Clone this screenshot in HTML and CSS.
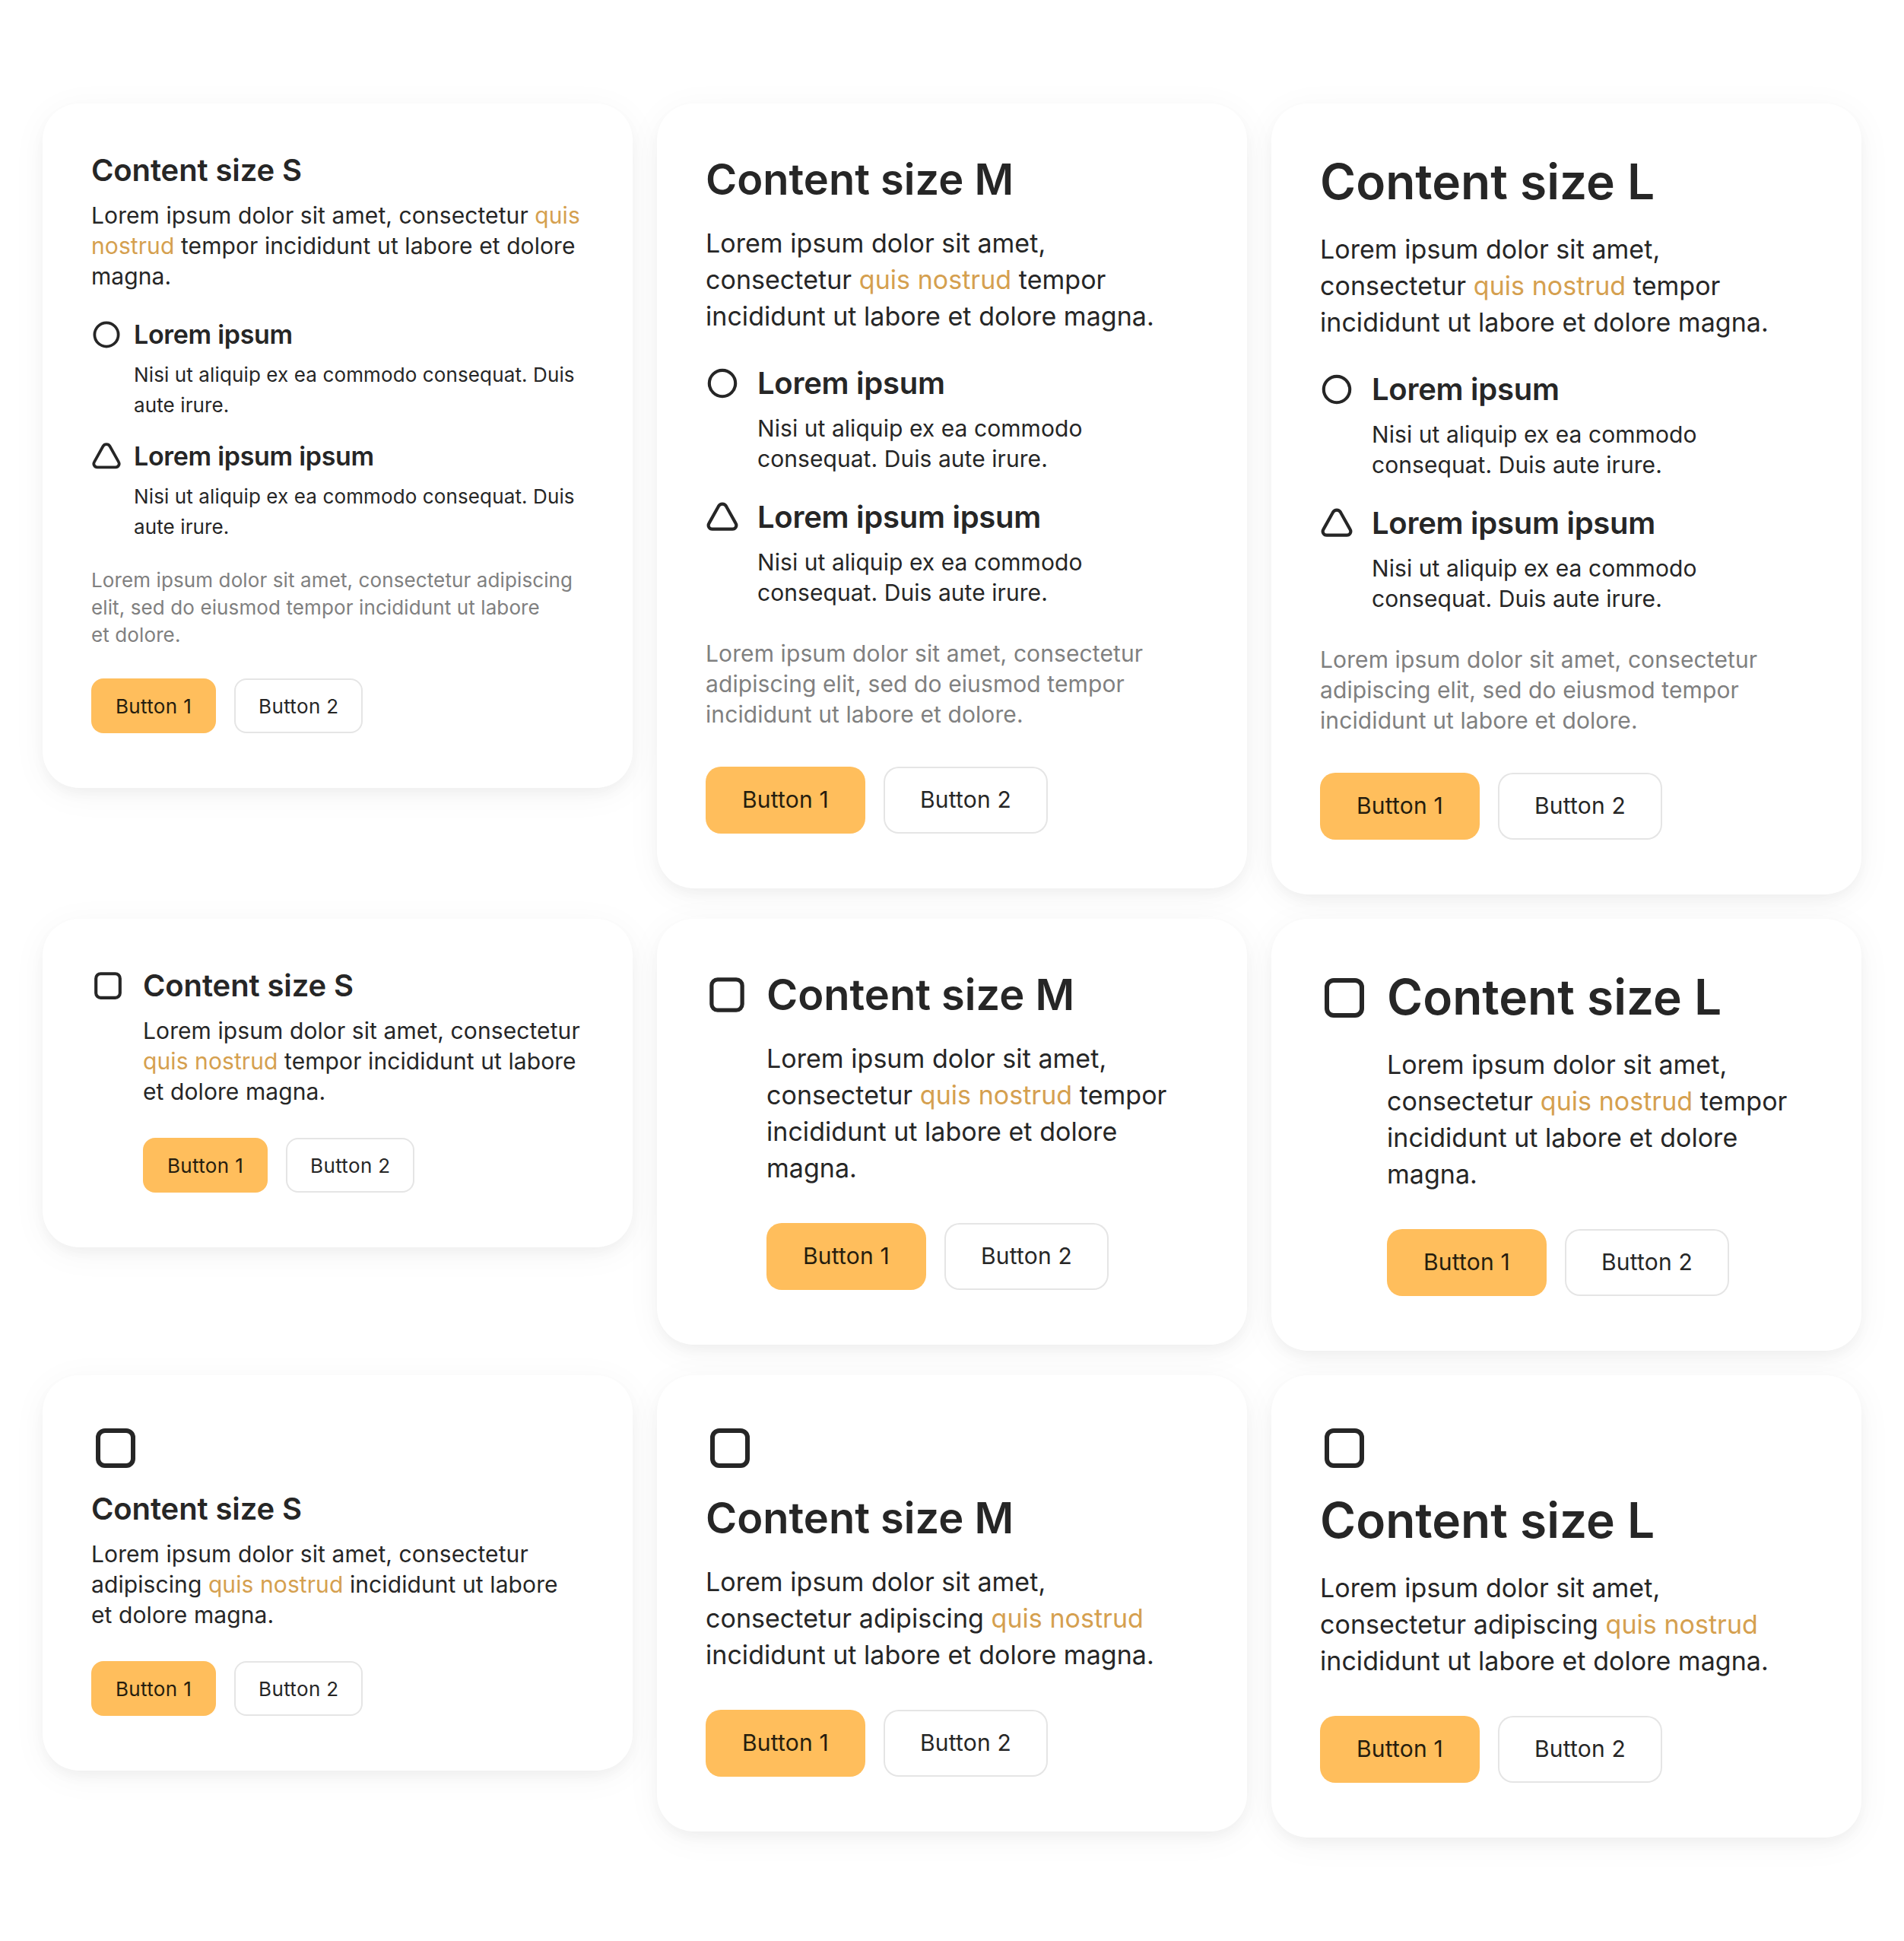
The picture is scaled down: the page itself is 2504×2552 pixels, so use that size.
FILE: index.html
```
<!DOCTYPE html>
<html lang="en">
<head>
<meta charset="utf-8">
<title>Content</title>
<link rel="stylesheet" href="styles.css">
</head>
<body>
<svg class="sprite" aria-hidden="true">
  <symbol id="circle" viewBox="0 0 16 16"><circle cx="8" cy="8" r="6.25"/></symbol>
  <symbol id="triangle" viewBox="0 0 16 16"><path d="M6.2 2.7 1.6 10.95C.85 12.2 1.75 13.7 3.2 13.7h9.6c1.45 0 2.35-1.5 1.6-2.75L9.8 2.7C9 1.35 7 1.35 6.2 2.7Z"/></symbol>
  <symbol id="square" viewBox="0 0 16 16"><rect x="2.25" y="2.25" width="11.5" height="11.5" rx="2.25"/></symbol>
</svg>
<main class="grid">
  <section class="card size-s">
    <h2 class="title">Content size S</h2>
    <p class="text">Lorem ipsum dolor sit amet, consectetur <a class="link">quis nostrud</a> tempor incididunt ut labore et dolore magna.</p>
    <ul class="list">
      <li class="item"><svg class="icon"><use href="#circle"/></svg><div><h3 class="item-title">Lorem ipsum</h3><p class="item-text">Nisi ut aliquip ex ea commodo consequat. Duis aute irure.</p></div></li>
      <li class="item"><svg class="icon"><use href="#triangle"/></svg><div><h3 class="item-title">Lorem ipsum ipsum</h3><p class="item-text">Nisi ut aliquip ex ea commodo consequat. Duis aute irure.</p></div></li>
    </ul>
    <p class="note">Lorem ipsum dolor sit amet, consectetur adipiscing elit, sed do eiusmod tempor incididunt ut labore et&nbsp;dolore.</p>
    <div class="buttons"><a class="button primary">Button 1</a><a class="button">Button 2</a></div>
  </section>
  <section class="card size-m">
    <h2 class="title">Content size M</h2>
    <p class="text">Lorem ipsum dolor sit amet,<br>consectetur <a class="link">quis nostrud</a> tempor<br>incididunt ut labore et dolore magna.</p>
    <ul class="list">
      <li class="item"><svg class="icon"><use href="#circle"/></svg><div><h3 class="item-title">Lorem ipsum</h3><p class="item-text">Nisi ut aliquip ex ea commodo consequat. Duis aute irure.</p></div></li>
      <li class="item"><svg class="icon"><use href="#triangle"/></svg><div><h3 class="item-title">Lorem ipsum ipsum</h3><p class="item-text">Nisi ut aliquip ex ea commodo consequat. Duis aute irure.</p></div></li>
    </ul>
    <p class="note">Lorem ipsum dolor sit amet, consectetur adipiscing elit, sed do eiusmod tempor incididunt ut labore et&nbsp;dolore.</p>
    <div class="buttons"><a class="button primary">Button 1</a><a class="button">Button 2</a></div>
  </section>
  <section class="card size-l">
    <h2 class="title">Content size L</h2>
    <p class="text">Lorem ipsum dolor sit amet,<br>consectetur <a class="link">quis nostrud</a> tempor<br>incididunt ut labore et dolore magna.</p>
    <ul class="list">
      <li class="item"><svg class="icon"><use href="#circle"/></svg><div><h3 class="item-title">Lorem ipsum</h3><p class="item-text">Nisi ut aliquip ex ea commodo consequat. Duis aute irure.</p></div></li>
      <li class="item"><svg class="icon"><use href="#triangle"/></svg><div><h3 class="item-title">Lorem ipsum ipsum</h3><p class="item-text">Nisi ut aliquip ex ea commodo consequat. Duis aute irure.</p></div></li>
    </ul>
    <p class="note">Lorem ipsum dolor sit amet, consectetur adipiscing elit, sed do eiusmod tempor incididunt ut labore et&nbsp;dolore.</p>
    <div class="buttons"><a class="button primary">Button 1</a><a class="button">Button 2</a></div>
  </section>

  <section class="card icon-left size-s">
    <svg class="lead-icon"><use href="#square"/></svg>
    <div>
      <h2 class="title">Content size S</h2>
      <p class="text">Lorem ipsum dolor sit amet, consectetur <a class="link">quis nostrud</a> tempor incididunt ut labore et&nbsp;dolore magna.</p>
      <div class="buttons"><a class="button primary">Button 1</a><a class="button">Button 2</a></div>
    </div>
  </section>
  <section class="card icon-left size-m">
    <svg class="lead-icon"><use href="#square"/></svg>
    <div>
      <h2 class="title">Content size M</h2>
      <p class="text">Lorem ipsum dolor sit amet, consectetur <a class="link">quis nostrud</a> tempor incididunt ut labore et dolore magna.</p>
      <div class="buttons"><a class="button primary">Button 1</a><a class="button">Button 2</a></div>
    </div>
  </section>
  <section class="card icon-left size-l">
    <svg class="lead-icon"><use href="#square"/></svg>
    <div>
      <h2 class="title">Content size L</h2>
      <p class="text">Lorem ipsum dolor sit amet, consectetur <a class="link">quis nostrud</a> tempor incididunt ut labore et dolore magna.</p>
      <div class="buttons"><a class="button primary">Button 1</a><a class="button">Button 2</a></div>
    </div>
  </section>

  <section class="card icon-top size-s">
    <svg class="lead-icon"><use href="#square"/></svg>
    <h2 class="title">Content size S</h2>
    <p class="text">Lorem ipsum dolor sit amet, consectetur adipiscing <a class="link">quis nostrud</a> incididunt ut labore et&nbsp;dolore magna.</p>
    <div class="buttons"><a class="button primary">Button 1</a><a class="button">Button 2</a></div>
  </section>
  <section class="card icon-top size-m">
    <svg class="lead-icon"><use href="#square"/></svg>
    <h2 class="title">Content size M</h2>
    <p class="text">Lorem ipsum dolor sit amet,<br>consectetur adipiscing <a class="link">quis nostrud</a><br>incididunt ut labore et dolore magna.</p>
    <div class="buttons"><a class="button primary">Button 1</a><a class="button">Button 2</a></div>
  </section>
  <section class="card icon-top size-l">
    <svg class="lead-icon"><use href="#square"/></svg>
    <h2 class="title">Content size L</h2>
    <p class="text">Lorem ipsum dolor sit amet,<br>consectetur adipiscing <a class="link">quis nostrud</a><br>incididunt ut labore et dolore magna.</p>
    <div class="buttons"><a class="button primary">Button 1</a><a class="button">Button 2</a></div>
  </section>
</main>
</body>
</html>
```
FILE: styles.css
```
* { box-sizing: border-box; margin: 0; padding: 0; }

body {
  background: #fff;
  color: #262626;
  font-family: Inter, "Liberation Sans", sans-serif;
}

.sprite { display: none; }

.grid {
  display: grid;
  grid-template-columns: repeat(3, 776px);
  gap: 32px;
  align-items: start;
  padding: 136px 56px;
}

.card {
  padding: 64px 64px 72px;
  border-radius: 48px;
  background: #fff;
  box-shadow: 0 8px 48px rgba(0, 0, 0, .045), 0 8px 16px rgba(0, 0, 0, .035);
}

.size-s {
  --title: 600 40px/48px Inter, sans-serif;
  --text: 30px/40px Inter, sans-serif;
  --item-title: 600 34px/48px Inter, sans-serif;
  --item-text: 26px/40px Inter, sans-serif;
  --note: 26px/36px Inter, sans-serif;
  --button: 26px/74px Inter, sans-serif;
  --title-line: 48px;
  --lead: 44px;
  --icon: 40px;
  --icon-gap: 16px;
  --gap-text: 16px;
  --gap-block: 32px;
  --gap-item: 24px;
  --gap-item-text: 8px;
  --gap-buttons: 40px;
  --button-height: 72px;
  --button-pad: 32px;
  --button-radius: 16px;
  --title-spacing: -.11px;
  --text-spacing: .09px;
  --item-title-spacing: -.3px;
  --item-text-spacing: .12px;
  --note-spacing: .11px;
  --button-spacing: .34px;
  --text-shift: -1px;
  --small-shift: 1px;
}

.size-m, .size-l {
  --title: 600 56px/72px Inter, sans-serif;
  --text: 34px/48px Inter, sans-serif;
  --item-title: 600 40px/48px Inter, sans-serif;
  --item-text: 30px/40px Inter, sans-serif;
  --note: 30px/40px Inter, sans-serif;
  --button: 30px/86px Inter, sans-serif;
  --title-line: 72px;
  --lead: 56px;
  --icon: 44px;
  --icon-gap: 24px;
  --gap-text: 24px;
  --gap-block: 40px;
  --gap-item: 32px;
  --gap-item-text: 16px;
  --gap-buttons: 48px;
  --button-height: 88px;
  --button-pad: 48px;
  --button-radius: 20px;
  --title-spacing: 0;
  --text-spacing: .04px;
  --item-title-spacing: -.27px;
  --item-text-spacing: .06px;
  --note-spacing: .1px;
  --button-spacing: .2px;
  --text-shift: 0px;
  --small-shift: -1px;
}

.size-l {
  --title: 600 64px/80px Inter, sans-serif;
  --title-line: 80px;
  --lead: 64px;
}

.title { font: var(--title); letter-spacing: var(--title-spacing); }

.size-l .title { margin: -1px 0 1px; }

.text {
  margin-top: calc(var(--gap-text) + var(--text-shift));
  margin-bottom: calc(0px - var(--text-shift));
  font: var(--text);
  letter-spacing: var(--text-spacing);
}

.size-l .text { margin-top: 25px; }
.size-l .title { margin-bottom: 0; }

.link { color: #d5a04f; }

.list {
  display: flex;
  flex-direction: column;
  gap: var(--gap-item);
  padding-top: var(--gap-block);
  list-style: none;
}

.item { display: flex; gap: var(--icon-gap); }

.icon, .lead-icon {
  flex: none;
  display: block;
  fill: none;
  stroke: #262626;
  stroke-width: 1.5;
}

.icon {
  width: var(--icon);
  height: var(--icon);
  margin-top: calc((48px - var(--icon)) / 2);
}

.item-title { font: var(--item-title); letter-spacing: var(--item-title-spacing); }

.item-text {
  margin-top: calc(var(--gap-item-text) + var(--small-shift));
  margin-bottom: calc(0px - var(--small-shift));
  font: var(--item-text);
  letter-spacing: var(--item-text-spacing);
}

.note {
  margin-top: calc(var(--gap-block) + var(--small-shift));
  margin-bottom: calc(0px - var(--small-shift));
  color: #808080;
  font: var(--note);
  letter-spacing: var(--note-spacing);
}

.buttons { display: flex; gap: 24px; padding-top: var(--gap-buttons); }

.button {
  height: var(--button-height);
  padding: 0 var(--button-pad);
  border-radius: var(--button-radius);
  box-shadow: inset 0 0 0 2px #e5e5e5;
  font: var(--button);
  letter-spacing: var(--button-spacing);
  white-space: nowrap;
}

.primary { background: #ffbe5c; box-shadow: none; color: #261d0e; }

.icon-left { display: flex; gap: 24px; }

.icon-left .lead-icon {
  width: var(--lead);
  height: var(--lead);
  margin-top: calc((var(--title-line) - var(--lead)) / 2);
}

.icon-top .lead-icon { width: 64px; height: 64px; margin-bottom: 24px; }
```
